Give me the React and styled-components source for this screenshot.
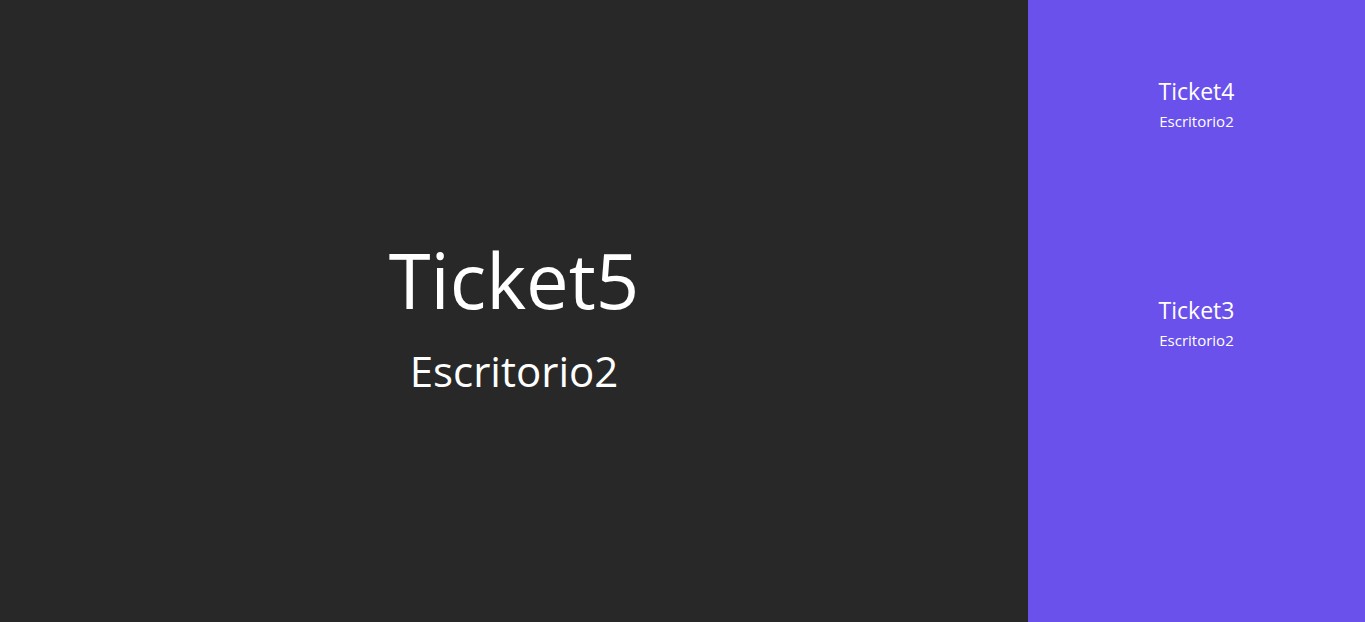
import React from "react";
import styled, { createGlobalStyle } from "styled-components";

const GlobalStyle = createGlobalStyle`
  html, body {
    margin: 0;
    padding: 0;
    height: 100%;
  }
  body {
    font-family: "Open Sans", "Noto Sans", sans-serif;
    color: #fff;
  }
  #root {
    height: 100%;
  }
`;

const tickets = [
  { id: 4, desk: "Escritorio2" },
  { id: 3, desk: "Escritorio2" },
];

const App = () => {
  return (
    <>
      <GlobalStyle />
      <Screen>
        <Current>
          <BigTicket>Ticket5</BigTicket>
          <BigDesk>Escritorio2</BigDesk>
        </Current>
        <History>
          {tickets.map((t) => (
            <HistoryItem key={t.id}>
              <SmallTicket>Ticket{t.id}</SmallTicket>
              <SmallDesk>{t.desk}</SmallDesk>
            </HistoryItem>
          ))}
        </History>
      </Screen>
    </>
  );
};

export default App;

const Screen = styled.div`
  display: flex;
  width: 100%;
  height: 622px;
`;

const Current = styled.div`
  flex: 0 0 1028px;
  background: #282828;
  display: flex;
  flex-direction: column;
  align-items: center;
  justify-content: center;
  padding-top: 8px;
  box-sizing: border-box;
`;

const BigTicket = styled.h1`
  margin: 0;
  font-size: 76px;
  font-weight: 400;
  line-height: 1.2;
`;

const BigDesk = styled.h2`
  margin: 21px 0 0;
  font-size: 42px;
  font-weight: 400;
  line-height: 1.2;
`;

const History = styled.div`
  flex: 1;
  background: #6a51ec;
  display: flex;
  flex-direction: column;
  align-items: center;
  padding-top: 75px;
  gap: 163px;
`;

const HistoryItem = styled.div`
  display: flex;
  flex-direction: column;
  align-items: center;
  gap: 4px;
`;

const SmallTicket = styled.span`
  font-size: 23px;
  line-height: 32px;
`;

const SmallDesk = styled.span`
  font-size: 15px;
  line-height: 20px;
`;
